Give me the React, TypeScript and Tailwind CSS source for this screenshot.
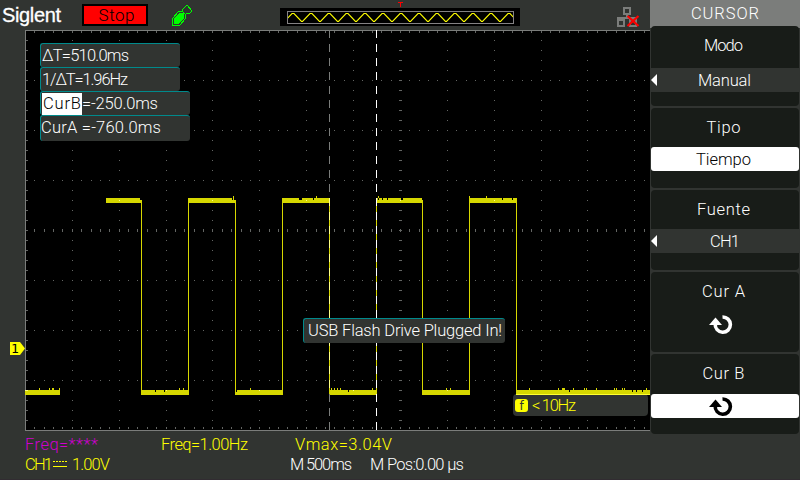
import { useLayoutEffect, useRef, useState } from "react";
import type { ReactNode } from "react";

// Text tracked so that it fills an exact width, like a bitmap instrument font.
function Fit({ children, width, className = "" }: { children: string; width: number; className?: string }) {
  const ref = useRef<HTMLSpanElement>(null);
  const [tracking, setTracking] = useState(0);
  useLayoutEffect(() => {
    const natural = ref.current!.getBoundingClientRect().width;
    setTracking((width - natural) / (children.length - 1));
  }, [children, width]);
  return (
    <span className={"block shrink-0 whitespace-pre " + className} style={{ width }}>
      <span ref={ref} className="inline-block" style={{ letterSpacing: tracking }}>
        {children}
      </span>
    </span>
  );
}

const columnXs = Array.from({ length: 66 }, (_, i) => Math.ceil((i + 1) * 9.375 - 0.5));
const rowYs = Array.from({ length: 39 }, (_, i) => (i + 1) * 10);

function Graticule() {
  const major = (n: number) => n % 5 === 0;
  return (
    <g fill="#636563">
      <rect x="0" y="0" width="625" height="1" fill="#7b7d7b" />
      <rect x="0" y="400" width="625" height="1" fill="#7b7d7b" />
      <rect x="0" y="0" width="1" height="401" fill="#7b7d7b" />
      {columnXs.map((x, i) => (
        <g key={x}>
          <rect x={x} y="1" width="1" height="2" />
          <rect x={x} y="397" width="1" height="2" />
          <rect x={x} y="199" width="1" height="3" />
          {[50, 100, 150, 250, 300, 350].map((y) => (
            <rect key={y} x={x} y={y} width="1" height="1" />
          ))}
          {major(i + 1) &&
            rowYs.filter((y) => y % 50 !== 0).map((y) => <rect key={y} x={x} y={y} width="1" height="1" />)}
        </g>
      ))}
      {rowYs.map((y) => (
        <g key={y}>
          <rect x="1" y={y} width="2" height="1" />
          <rect x="374" y={y} width="3" height="1" />
        </g>
      ))}
    </g>
  );
}

const highs = [[81, 116], [163, 210], [257, 304], [351, 397], [444, 491]];
const lows = [[0, 34], [116, 163], [210, 257], [304, 351], [397, 444], [491, 624]];
const edges = [116, 163, 210, 257, 304, 351, 397, 444, 491];
// [x, width] of one-sample noise peaks and dips on each level
const highDips = [[115, 2], [207, 1], [209, 2], [274, 3], [288, 1], [353, 1], [357, 1], [362, 1], [376, 2], [397, 1], [477, 1], [487, 1]];
const highPeaks = [208, 291, 353, 444, 461];
const lowDips = [130, 139, 211, 323, 544, 607, 611, 617];
const lowPeaks = [[14, 1], [24, 1], [27, 2], [34, 1], [154, 1], [158, 1], [225, 1], [306, 1], [309, 1], [312, 1], [315, 1], [347, 1], [421, 1], [425, 1], [504, 1], [533, 1], [537, 3], [548, 1], [559, 1], [561, 1], [571, 1], [589, 1], [591, 1], [597, 1], [599, 1], [621, 1]];

function Waveform() {
  return (
    <g fill="#d6d700" shapeRendering="crispEdges">
      {highs.map(([a, b]) => <rect key={a} x={a} y="168" width={b - a + 1} height="5" />)}
      {lows.map(([a, b]) => <rect key={a} x={a} y="360" width={b - a + 1} height="5" />)}
      {edges.map((x) => <rect key={x} x={x} y="170" width="1" height="195" />)}
      {highPeaks.map((x) => <rect key={x} x={x} y="166" width="1" height="4" />)}
      {lowPeaks.map(([x, w]) => <rect key={x} x={x} y="358" width={w} height="2" />)}
      <g fill="#000">
        {highDips.map(([x, w], i) => <rect key={i} x={x} y="168" width={w} height="2" />)}
        {lowDips.map((x) => <rect key={x} x={x} y="360" width="1" height="2" />)}
      </g>
      <g fill="#ffff84">
        {[94, 187, 281, 375, 469].map((x) => <rect key={x} x={x} y="170" width="1" height="1" />)}
        {[141, 234, 328, 422].map((x) => <rect key={x} x={x} y="360" width="1" height="1" />)}
        <rect x="0" y="360" width="3" height="1" />
      </g>
    </g>
  );
}

function Cursors() {
  const dashes = Array.from({ length: 29 }, (_, i) => i * 14);
  return (
    <g shapeRendering="crispEdges">
      {dashes.map((y) => (
        <g key={y}>
          <rect x="304" y={y} width="1" height="8" fill={y >= 168 && y < 364 ? "#ffff84" : "#7b7d7b"} />
          <rect x="351" y={y} width="1" height="8" fill="#fff" />
        </g>
      ))}
    </g>
  );
}

function Reading({ wide, last, children }: { wide?: boolean; last?: boolean; children: ReactNode }) {
  return (
    <div
      className={
        "flex rounded-[3px] border-l border-t border-[#008a8c] bg-[#313431] " +
        (wide ? "w-[150px] " : "w-[140px] ") +
        (last ? "h-[26px]" : "h-6")
      }
    >
      {children}
    </div>
  );
}

function Minimap() {
  // Triangle wave with a period of 18 pixels, flattened at its tips
  const points = Array.from({ length: 27 }, (_, i) => {
    const x = 5 + (i - 1) * 9;
    return i % 2 ? `${x - 1},1.5 ${x + 1},1.5` : `${x - 0.5},9.5 ${x + 0.5},9.5`;
  }).join(" ");
  return (
    <div className="flex h-[18px] w-60 items-center justify-center bg-black">
      <div className="h-[13px] w-[227px] border border-[#848284]">
        <svg width="225" height="11">
          <polyline points={points} fill="none" stroke="#ffff00" strokeWidth="1.1" />
        </svg>
      </div>
    </div>
  );
}

function UsbIcon() {
  return (
    <svg width="22" height="24" viewBox="171 4 22 24" fill="none" stroke="#00ff00" shapeRendering="crispEdges">
      <path d="M172.5 25.5V18.5L178.5 11.5H182.500L185.500 14.500V18.5L179.5 25.5Z" />
      <path d="M174 24V19L179 13H184V18L178 24Z" fill="#00ff00" stroke="none" />
      <path d="M182.5 11.5V9.5L186.5 5.5H187.5L191.5 10.5V11.500L189.500 13.5H185.5" />
    </svg>
  );
}

function NetworkOffIcon() {
  return (
    <svg width="24" height="22" viewBox="616 6 24 22" fill="none" stroke="#7b7d7b" strokeWidth="2" shapeRendering="crispEdges">
      <path d="M624 8H630V14H624ZM618 20H624V26H618ZM630 20H636V26H630Z" />
      <path d="M627 15V18M617 18H637" strokeWidth="2" />
      <path d="M627.500 16L638.500 26M638.500 16L627.500 26" stroke="#ff0000" strokeWidth="2.200" shapeRendering="auto" />
    </svg>
  );
}

function KnobIcon() {
  return (
    <svg width="26" height="22" viewBox="708 313 26 22" fill="none" stroke="currentColor" strokeWidth="3.600">
      <path d="M722.500 317A7.600 7.600 0 1 1 715.200 324" />
      <path d="M709 325L715.500 317.500L722 325Z" fill="currentColor" stroke="none" />
    </svg>
  );
}

function MenuCard({ title, width, titleHeight = "h-10", children }: { title: string; width: number; titleHeight?: string; children?: ReactNode }) {
  return (
    <div className="flex h-20 flex-col items-center rounded-[4px] bg-[#181c18]">
      <div className={"flex w-full justify-center pt-[10px] pr-[3px] " + titleHeight}>
        <Fit width={width}>{title}</Fit>
      </div>
      {children}
    </div>
  );
}

function LeftArrow() {
  return (
    <svg width="6" height="12" className="shrink-0">
      <path d="M6 0V12L0 6Z" fill="#fff" />
    </svg>
  );
}

export default function App() {
  return (
    <div className="flex h-[480px] w-[800px] overflow-hidden border-b border-[#312c31] bg-[#313431] font-['Roboto','Liberation_Sans',sans-serif] text-[16.5px] leading-5 font-light text-white">
      <main className="flex w-[650px] flex-col">
        <header className="flex h-[30px] items-start">
          <div className="w-[82px] pt-[5px] pl-[2px] font-['Liberation_Sans',sans-serif] text-[20px] font-normal [-webkit-text-stroke:0.3px_white]">
            <Fit width={59}>Siglent</Fit>
          </div>
          <div className="mt-1 flex h-[22px] w-[66px] justify-center border-2 border-black bg-[#ff0000] pl-[3px] text-[17px] text-black">
            <Fit width={36} className="-mt-px">Stop</Fit>
          </div>
          <div className="mt-1 ml-[23px]">
            <UsbIcon />
          </div>
          <div className="mt-[2px] ml-[87px] flex w-60 flex-col items-center">
            <svg width="5" height="6" shapeRendering="crispEdges" className="ml-px">
              <path d="M0 0H5V1H3V5H2V1H0Z" fill="#ff0000" />
            </svg>
            <Minimap />
          </div>
          <div className="mt-[6px] ml-[96px]">
            <NetworkOffIcon />
          </div>
        </header>

        <div className="flex h-[401px]">
          <div className="w-[25px] pt-[312px] pl-[10px]">
            <div className="flex h-[13px] w-[15px] bg-[#ffff00] pl-[1px] font-['DejaVu_Sans_Mono',monospace] text-[13px] leading-[13px] font-normal text-black [clip-path:polygon(0_0,10px_0,15px_50%,10px_100%,0_100%)]">
              1
            </div>
          </div>
          <div className="relative h-[401px] w-[625px] bg-black">
            <svg width="625" height="401" shapeRendering="crispEdges">
              <Graticule />
              <Waveform />
              <Cursors />
            </svg>

            <div className="absolute top-[13px] left-[15px] flex flex-col">
              <Reading><Fit width={87} className="ml-px mt-[2px]">ΔT=510.0ms</Fit></Reading>
              <Reading><Fit width={86} className="ml-px mt-[2px]">1/ΔT=1.96Hz</Fit></Reading>
              <Reading wide>
                <div className="mt-px ml-px h-[22px] w-10 bg-white pl-px text-black">
                  <Fit width={38} className="mt-px">CurB</Fit>
                </div>
                <Fit width={76} className="mt-[2px]">=-250.0ms</Fit>
              </Reading>
              <Reading wide last><Fit width={120} className="mt-[2px]">CurA =-760.0ms</Fit></Reading>
            </div>

            <div className="absolute top-[288px] left-[278px] flex h-[25px] w-[202px] rounded-[3px] border-l border-t border-[#008a8c] bg-[#313431] pt-[2px] pl-1">
              <Fit width={194}>USB Flash Drive Plugged In!</Fit>
            </div>

            <div className="absolute top-[364px] left-[488px] flex h-[22px] w-[135px] items-center rounded-[4px] bg-[#313431] pt-px pl-[2px] text-[#ffff00]">
              <div className="flex h-[13px] w-[13px] items-center justify-center rounded-[3px] bg-[#ffff00] font-['DejaVu_Sans',sans-serif] text-[12px] leading-none font-normal text-[#313431]">
                f
              </div>
              <Fit width={44} className="mt-px ml-1">{"< 10Hz"}</Fit>
            </div>
            <div className="absolute top-[364px] left-[491px] h-px w-[134px] bg-[#ffff31]" />
          </div>
        </div>

        <footer className="flex h-12 flex-col pt-1 pl-[25px] text-[#ffff00]">
          <div className="flex h-5">
            <div className="w-[136px] text-[#ce00ce]"><Fit width={73}>Freq=****</Fit></div>
            <div className="w-[134px]"><Fit width={87}>Freq=1.00Hz</Fit></div>
            <Fit width={97}>Vmax=3.04V</Fit>
          </div>
          <div className="flex h-5">
            <Fit width={28}>CH1</Fit>
            <svg width="15" height="20" shapeRendering="crispEdges">
              <path d="M0 6.5H14" stroke="#ff0" strokeDasharray="2 1" />
              <path d="M0 11.5H14" stroke="#ff0" />
            </svg>
            <div className="w-[222px] pl-1"><Fit width={38}>1.00V</Fit></div>
            <div className="w-20 text-white"><Fit width={62}>M 500ms</Fit></div>
            <Fit width={94} className="text-white">M Pos:0.00 µs</Fit>
          </div>
        </footer>
      </main>

      <aside className="w-[150px]">
        <h1 className="flex h-[26px] justify-center bg-[#7b7d7b] pt-1">
          <Fit width={68}>CURSOR</Fit>
        </h1>
        <div className="flex flex-col gap-[2px] bg-[linear-gradient(#7b7d7b_2px,#313431_2px)] px-px">
          <MenuCard title="Modo" width={39} titleHeight="h-[42px]">
            <div className="flex h-6 w-full items-center bg-[#313431]">
              <LeftArrow />
              <Fit width={53} className="mt-[2px] ml-[41px]">Manual</Fit>
            </div>
          </MenuCard>
          <MenuCard title="Tipo" width={34} titleHeight="h-[39px]">
            <div className="flex h-6 w-full items-center justify-center rounded-[3px] bg-white pr-[3px] text-black">
              <Fit width={55} className="mt-[2px]">Tiempo</Fit>
            </div>
          </MenuCard>
          <MenuCard title="Fuente" width={53} titleHeight="h-[39px]">
            <div className="flex h-6 w-full items-center bg-[#313431]">
              <LeftArrow />
              <Fit width={30} className="mt-[2px] ml-[53px]">CH1</Fit>
            </div>
          </MenuCard>
          <MenuCard title="Cur A" width={43}>
            <div className="flex h-6 w-full items-center justify-center pr-[8px]"><KnobIcon /></div>
          </MenuCard>
          <MenuCard title="Cur B" width={42}>
            <div className="flex h-6 w-full items-center justify-center rounded-[3px] bg-white pr-[8px] text-black"><KnobIcon /></div>
          </MenuCard>
        </div>
      </aside>
    </div>
  );
}
